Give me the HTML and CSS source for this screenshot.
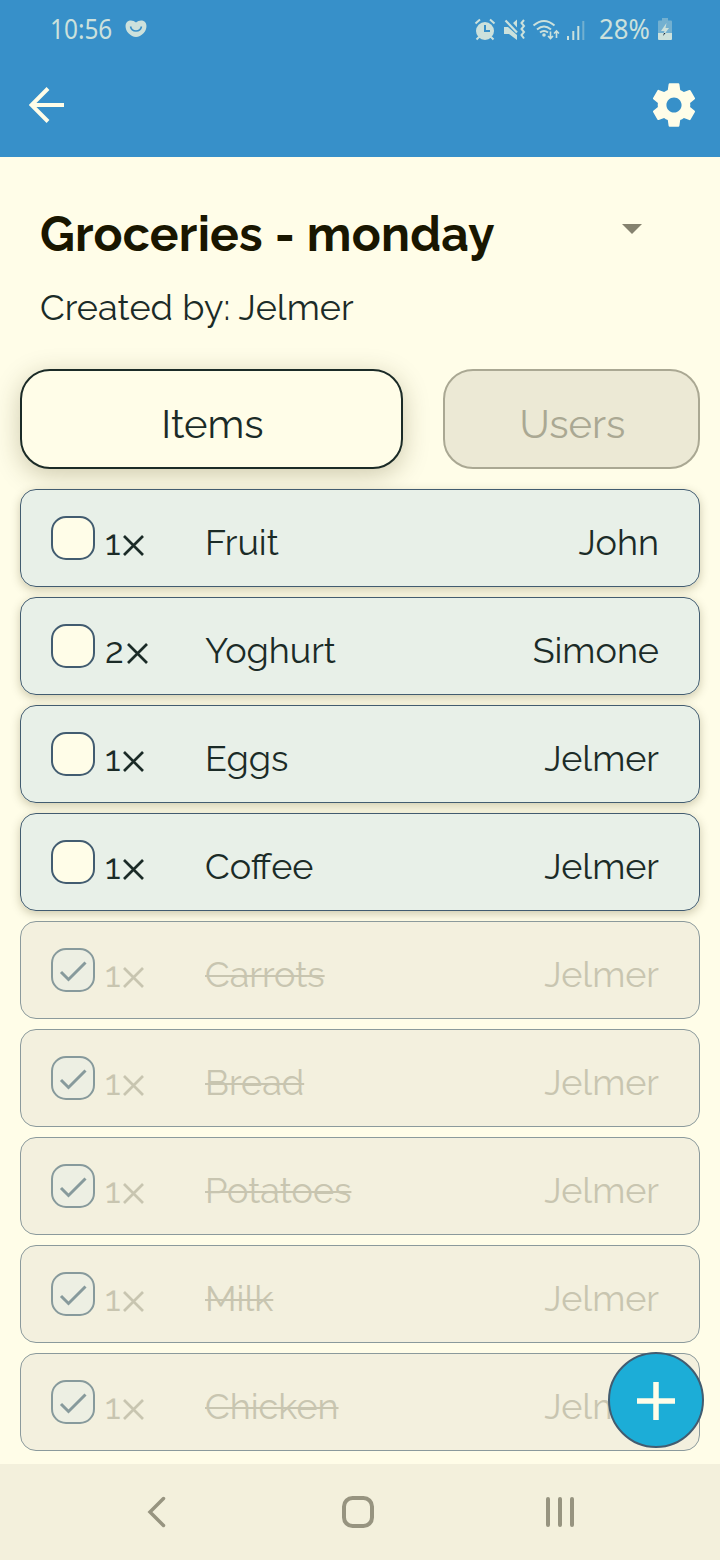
FILE: index.html
```
<!DOCTYPE html>
<html lang="en">
<head>
<meta charset="utf-8">
<title>Groceries - monday</title>
<link rel="stylesheet" href="styles.css">
</head>
<body>
<svg class="defs" aria-hidden="true">
  <symbol id="check" viewBox="0 0 44 44"><path d="M10 24L17.500 31.500L34.500 14.500" fill="none" stroke="currentColor" stroke-width="3"/></symbol>
  <symbol id="times" viewBox="0 0 21 21"><path d="M1 1L20 20M20 1L1 20" fill="none" stroke="currentColor" stroke-width="2.700"/></symbol>
</svg>
<div class="screen">
  <header class="top">
    <div class="status">
      <span class="time">10:56</span>
      <svg class="heart" width="22" height="18" viewBox="0 0 22 18"><path d="M11 2.600C8.500 0 4.500-.3 2.200 1.800C-.5 4.500.2 10 3.500 13.200C5.800 15.600 8.300 17 11 17s5.200-1.400 7.500-3.800C21.800 10 22.500 4.500 19.800 1.800C17.500-.3 13.500 0 11 2.600z" fill="currentColor"/><path d="M5.500 6.500Q6.500 11 11 11Q15.500 11 16.500 6.500" fill="none" stroke="#3790c9" stroke-width="1.600"/></svg>
      <span class="grow"></span>
      <svg class="indicators" width="114" height="24" viewBox="475 17 114 24" fill="none" stroke="currentColor" stroke-width="2">
        <circle cx="486" cy="30" r="9" fill="currentColor" stroke="none"/><path d="M476.500 22.500L481 18.500M495.500 22.500L491 18.500M480 36l-2.500 2.500M492 36l2.500 2.500"/><path d="M486 24v6h5" stroke="#3790c9"/>
        <path d="M505 26h4L518 34v5l-8-6h-5zM514 22l4-3.500v8z" fill="currentColor" stroke="none"/><path d="M506.500 19.500L518 31.500" stroke-width="2.200"/><path d="M525 19l-2.500 3l2.500 3l-2.500 3l2.500 3l-2.500 3l2.500 3.500" stroke-width="2"/>
        <path d="M534.500 24.500Q545 15.500 555.500 24.500M538 28.500Q545 22.500 552 28.500M541 31.500Q545 28.500 549 31.500"/><circle cx="545" cy="34" r="1.800" fill="currentColor" stroke="none"/><path d="M551.500 30.500v7M549 35l2.500 2.500l2.500-2.500M557.500 37v-7M555 32.500l2.500-2.500l2.500 2.500" stroke-width="1.600"/>
        <path d="M569 35v4M574.300 30v9M579.300 25v14"/><path d="M584.300 20v19" opacity=".4"/>
      </svg>
      <span class="percent">28%</span>
      <svg class="battery" width="14" height="22" viewBox="0 0 14 22"><path d="M4 0h6v2.500h3a1 1 0 0 1 1 1V15H0V3.500a1 1 0 0 1 1-1h3z" fill="currentColor" opacity=".4"/><path d="M0 15h14v6a1 1 0 0 1-1 1H1a1 1 0 0 1-1-1z" fill="currentColor"/><path d="M8.500 5L3 13h3.500L5 18l6-8H7.500z" fill="currentColor"/><path d="M6 15L5 18l2.500-3z" fill="#123"/></svg>
    </div>
    <div class="toolbar">
      <svg class="back" width="36" height="36" viewBox="0 0 36 36"><path d="M35 18H3M19 1.500L2.500 18L19 34.500" fill="none" stroke="currentColor" stroke-width="4"/></svg>
      <svg class="gear" width="52" height="52" viewBox="0 0 24 24"><path fill="currentColor" d="M19.430 12.980c.04-.32.070-.64.070-.98s-.03-.66-.07-.98l2.110-1.650c.19-.15.240-.42.120-.64l-2-3.460c-.12-.22-.39-.3-.61-.22l-2.490 1c-.52-.4-1.080-.73-1.690-.98l-.38-2.650C14.460 2.180 14.250 2 14 2h-4c-.25 0-.46.180-.49.420l-.38 2.650c-.61.250-1.170.590-1.690.980l-2.490-1c-.23-.09-.49 0-.61.220l-2 3.460c-.13.220-.07.490.120.640l2.110 1.650c-.04.320-.07.650-.07.980s.030.660.070.980l-2.110 1.650c-.19.150-.24.420-.12.640l2 3.460c.12.220.39.300.61.220l2.490-1c.52.400 1.080.730 1.690.980l.38 2.650c.03.240.24.420.49.420h4c.25 0 .46-.18.490-.42l.38-2.650c.61-.25 1.170-.59 1.690-.98l2.490 1c.23.090.49 0 .61-.22l2-3.460c.12-.22.070-.49-.12-.64l-2.110-1.650zM12 15.500c-1.930 0-3.500-1.570-3.500-3.500s1.570-3.500 3.500-3.500 3.500 1.570 3.500 3.500-1.570 3.500-3.500 3.500z"/></svg>
    </div>
  </header>
  <main class="content">
    <div class="heading"><h1>Groceries - monday</h1><svg class="caret" width="20" height="10" viewBox="0 0 20 10"><path d="M0 0h20L10 10z" fill="currentColor"/></svg></div>
    <p class="creator">Created by: Jelmer</p>
    <div class="tabs"><button class="tab active">Items</button><button class="tab users">Users</button></div>
    <ul class="list">
      <li class="row"><span class="box"></span><span class="qty">1<svg><use href="#times"/></svg></span><span class="name">Fruit</span><span class="who">John</span></li>
      <li class="row"><span class="box"></span><span class="qty">2<svg><use href="#times"/></svg></span><span class="name">Yoghurt</span><span class="who">Simone</span></li>
      <li class="row"><span class="box"></span><span class="qty">1<svg><use href="#times"/></svg></span><span class="name">Eggs</span><span class="who">Jelmer</span></li>
      <li class="row"><span class="box"></span><span class="qty">1<svg><use href="#times"/></svg></span><span class="name">Coffee</span><span class="who">Jelmer</span></li>
      <li class="row done"><span class="box"><svg><use href="#check"/></svg></span><span class="qty">1<svg><use href="#times"/></svg></span><span class="name">Carrots</span><span class="who">Jelmer</span></li>
      <li class="row done"><span class="box"><svg><use href="#check"/></svg></span><span class="qty">1<svg><use href="#times"/></svg></span><span class="name">Bread</span><span class="who">Jelmer</span></li>
      <li class="row done"><span class="box"><svg><use href="#check"/></svg></span><span class="qty">1<svg><use href="#times"/></svg></span><span class="name">Potatoes</span><span class="who">Jelmer</span></li>
      <li class="row done"><span class="box"><svg><use href="#check"/></svg></span><span class="qty">1<svg><use href="#times"/></svg></span><span class="name">Milk</span><span class="who">Jelmer</span></li>
      <li class="row done"><span class="box"><svg><use href="#check"/></svg></span><span class="qty">1<svg><use href="#times"/></svg></span><span class="name">Chicken</span><span class="who">Jelmer</span></li>
    </ul>
    <button class="fab" aria-label="Add item"><svg width="38" height="38" viewBox="0 0 38 38"><path d="M19 0v38M0 19h38" stroke="currentColor" stroke-width="5.500"/></svg></button>
  </main>
  <nav class="nav">
    <svg width="720" height="96" viewBox="0 0 720 96" fill="none" stroke="currentColor" stroke-width="4" stroke-linecap="round"><path d="M163.500 34.500L150 48l13.500 13.500" stroke-width="3.500"/><rect x="344" y="34" width="28" height="28" rx="8.500"/><path d="M548 35v26M560 35v26M572 35v26"/></svg>
  </nav>
</div>
</body>
</html>
```
FILE: styles.css
```
* { box-sizing: border-box; }
body { margin: 0; background: #fffde8; color: #1b2b27; font-family: Raleway, Lato, "Open Sans", sans-serif; }
.defs { display: none; }
.screen { width: 720px; height: 1560px; display: flex; flex-direction: column; overflow: hidden; }
.top { height: 157px; background: #3790c9; color: #fffde8; }
.status { height: 60px; display: flex; align-items: center; padding: 0 48px 2px 50px; color: #cce1dc; font-family: "Noto Sans", "Open Sans", sans-serif; font-size: 26.5px; }
.time { width: 62px; transform: scaleX(.92); transform-origin: left; }
.heart { margin-left: 13px; }
.indicators { margin-top: 2px; }
.grow { flex: 1; }
.percent { width: 51px; margin-left: 11px; transform: scaleX(.97); transform-origin: left; }
.battery { margin-left: 8px; }
.toolbar { display: flex; justify-content: space-between; align-items: center; height: 90px; padding: 0 20px 0 28.5px; }
.content { position: relative; height: 1307px; padding: 0 20px; }
.heading { display: flex; justify-content: space-between; align-items: center; height: 143px; padding: 0 58px 0 20px; color: #191600; }
h1 { margin: 10px 0 0; font-size: 48px; line-height: 56px; font-weight: 700; letter-spacing: .22px; }
.caret { color: #85826f; }
.creator { margin: -14px 0 0; padding-left: 20px; font-size: 36px; line-height: 42px; font-weight: 400; letter-spacing: .06px; }
.tabs { display: flex; gap: 40px; margin-top: 41px; }
.tab { height: 100px; flex: 0 0 383px; border: 2px solid #1b2b27; border-radius: 30px; padding: 8px 0 0 2px; background: #fffde8; color: #1b2b27; font: 400 40px Raleway, Lato, sans-serif; }
.active { box-shadow: 0 6px 26px rgba(60, 50, 0, .25); }
.users { flex: 1; background: #ece9d5; border-color: #aaa893; color: #aaa893; }
.list { list-style: none; margin: 20px 0 0; padding: 0; display: grid; gap: 10px; }
.row { height: 98px; display: flex; align-items: center; padding: 0 40px 0 30px; border: 1px solid #425c70; border-radius: 16px; background: rgba(231, 239, 231, .97); box-shadow: 0 3px 10px rgba(60, 50, 0, .25); font-size: 36px; line-height: 42px; }
.box { width: 44px; height: 44px; border: 2px solid #425c70; border-radius: 15px; background: #fffde8; display: grid; }
.box svg { width: 44px; height: 44px; margin: -2px; }
.qty { width: 100px; margin: 8px 0 0 10px; display: flex; align-items: center; }
.qty svg { width: 21px; height: 21px; margin: 6px 0 0 3px; }
.name { padding-top: 7px; }
.who { margin-left: auto; padding-top: 7px; }
.done { background: rgba(243, 240, 221, .97); border-color: #8b9a9c; color: #c8c5b0; box-shadow: none; }
.done .box { border-color: #879a9c; color: #879a9c; background: #edefe3; }
.done .name { text-decoration: line-through; text-decoration-thickness: 2px; }
.fab { position: absolute; right: 16px; bottom: 16px; width: 96px; height: 96px; padding: 2px 0 0; border: 2px solid #425c70; border-radius: 50%; display: grid; place-items: center; background: #1cadd7; color: #fffde8; }
.nav { height: 96px; background: #f3f0dc; color: #979480; }
```
